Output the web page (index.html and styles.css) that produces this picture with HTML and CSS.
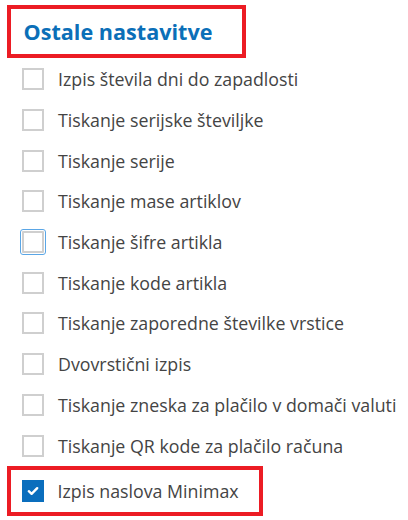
FILE: index.html
```html
<!DOCTYPE html>
<html lang="sl">
<head>
<meta charset="utf-8">
<link rel="stylesheet" href="styles.css">
</head>
<body>
<div class="page">
  <div class="title-box"><h2 class="title">Ostale nastavitve</h2></div>
  <ul class="options">
    <li class="row"><span class="cb"></span><span class="label">Izpis števila dni do zapadlosti</span></li>
    <li class="row"><span class="cb"></span><span class="label">Tiskanje serijske številjke</span></li>
    <li class="row"><span class="cb"></span><span class="label">Tiskanje serije</span></li>
    <li class="row"><span class="cb"></span><span class="label">Tiskanje mase artiklov</span></li>
    <li class="row"><span class="cb focus"></span><span class="label">Tiskanje šifre artikla</span></li>
    <li class="row"><span class="cb"></span><span class="label">Tiskanje kode artikla</span></li>
    <li class="row"><span class="cb"></span><span class="label">Tiskanje zaporedne številke vrstice</span></li>
    <li class="row"><span class="cb"></span><span class="label">Dvovrstični izpis</span></li>
    <li class="row"><span class="cb"></span><span class="label">Tiskanje zneska za plačilo v domači valuti</span></li>
    <li class="row"><span class="cb"></span><span class="label">Tiskanje QR kode za plačilo računa</span></li>
  </ul>
  <div class="hl-box">
    <div class="row last"><span class="cb checked"><svg viewBox="0 0 12 10" width="12" height="10"><path d="M1.8 5.2 L4.6 7.8 L10.2 2.2" fill="none" stroke="#fff" stroke-width="2.4" stroke-linecap="round" stroke-linejoin="round"/></svg></span><span class="label">Izpis naslova Minimax</span></div>
  </div>
</div>
</body>
</html>
```
FILE: styles.css
```css
* { box-sizing: border-box; }
html, body { margin: 0; padding: 0; background: #fff; }
body { font-family: "Open Sans", "Liberation Sans", sans-serif; width: 408px; height: 520px; overflow: hidden; }
.page { padding-top: 5px; }
.title-box {
  margin-left: 7px;
  width: 239px;
  height: 53px;
  border: 4.5px solid #ec1c24;
  display: flex;
  align-items: center;
  padding-left: 12.5px;
}
.title {
  margin: 0;
  font-size: 21.6px;
  font-weight: 700;
  color: #0b6fb8;
  line-height: 1;
  padding-top: 1px;
}
.options { list-style: none; margin: 0; padding: 0 0 0 22px; margin-top: 1px; }
.row {
  display: flex;
  align-items: center;
  height: 40.7px;
  gap: 14px;
}
.cb {
  flex: none;
  width: 22px;
  height: 22px;
  border: 2px solid #cfcfcf;
  background: #fff;
  display: flex;
  align-items: center;
  justify-content: center;
}
.cb.focus {
  outline: 1.5px solid #5aa6e6;
  outline-offset: 1px;
  border-radius: 1px;
}
.cb.checked { background: #0a6ebd; border-color: #0a6ebd; }
.label { font-size: 17.8px; color: #444; white-space: nowrap; }
.hl-box {
  margin-left: 7px;
  margin-top: 0;
  width: 256px;
  height: 50px;
  border: 4.5px solid #ec1c24;
  padding-left: 10.5px;
  display: flex;
  align-items: center;
}
.row.last { height: auto; }
```
